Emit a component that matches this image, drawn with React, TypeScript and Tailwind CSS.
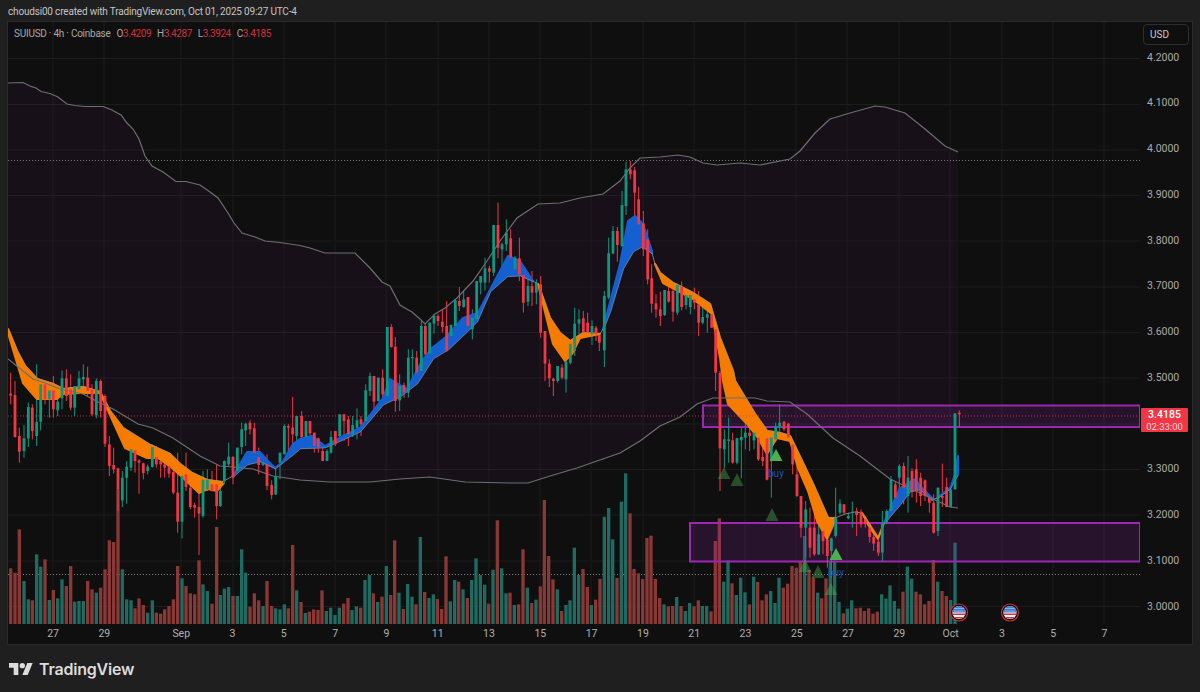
type Candle = { x: number; wt: number; bt: number; bb: number; wb: number; up: boolean };
type Bar = { x: number; top: number; up: boolean };
type Pt = [number, number];

const g = 1;
const r = 0;

// rows were read off 3x crops of the chart, so each block keeps its crop origin
function candles(x0: number, y0: number, rows: number[][]): Candle[] {
  return rows.map(([z, wt, bt, bb, wb, c]) => ({
    x: x0 + z / 3,
    wt: y0 + wt / 3,
    bt: y0 + bt / 3,
    bb: y0 + bb / 3,
    wb: y0 + wb / 3,
    up: c === g,
  }));
}

function bars(x0: number, y0: number, rows: number[][]): Bar[] {
  return rows.map(([z, top, c]) => ({ x: x0 + z / 3, top: y0 + top / 3, up: c === g }));
}

const CANDLES: Candle[] = [
  ...candles(0, 320, [
    [32, 155, 218, 224, 250, r], [45, 180, 222, 348, 350, r], [58, 320, 345, 392, 425, r], [72, 312, 352, 390, 410, g],
    [85, 245, 258, 352, 378, g], [97, 250, 260, 330, 355, r], [110, 130, 303, 345, 375, g], [122, 185, 190, 302, 328, g],
    [135, 180, 190, 235, 250, r], [148, 195, 208, 235, 290, g], [160, 165, 208, 265, 290, r], [173, 235, 242, 268, 285, g],
    [186, 148, 172, 232, 265, g], [199, 145, 172, 225, 240, r], [212, 160, 205, 260, 268, r], [224, 195, 195, 260, 285, g],
    [237, 150, 172, 205, 210, g], [250, 130, 168, 175, 210, g], [263, 137, 170, 210, 225, r], [276, 190, 205, 280, 285, r],
    [289, 172, 180, 283, 292, g], [302, 175, 180, 270, 290, r], [315, 220, 225, 368, 378, r], [328, 345, 370, 435, 465, r],
    [341, 380, 432, 445, 458, r], [354, 440, 442, 505, 570, r], [367, 450, 470, 538, 558, g], [380, 420, 437, 470, 548, g],
    [393, 385, 385, 440, 450, g], [405, 385, 388, 420, 455, r], [417, 415, 418, 425, 518, r], [430, 425, 427, 456, 475, r],
    [443, 430, 437, 450, 460, g], [457, 370, 378, 438, 440, g], [469, 375, 408, 430, 440, r], [482, 395, 420, 430, 470, r],
    [494, 405, 430, 440, 470, r], [507, 425, 435, 458, 470, r], [520, 440, 453, 515, 520, r], [533, 395, 515, 602, 635, r],
    [546, 450, 465, 602, 652, g], [558, 395, 460, 498, 510, r], [571, 465, 500, 558, 565, r], [584, 545, 552, 560, 590, r],
    [597, 510, 558, 578, 702, r], [609, 450, 476, 585, 590, g], [622, 445, 476, 505, 510, g], [636, 450, 490, 510, 512, r],
    [650, 430, 490, 555, 595, r], [661, 490, 510, 555, 558, g], [673, 418, 420, 480, 490, g], [686, 365, 407, 430, 435, g],
    [699, 405, 408, 470, 490, r], [712, 380, 380, 450, 455, g], [725, 305, 325, 378, 400, g], [737, 305, 308, 328, 375, g],
    [750, 298, 305, 325, 340, r], [763, 305, 322, 395, 395, r], [776, 380, 408, 432, 460, r], [789, 405, 425, 432, 435, g],
    [801, 400, 430, 495, 508, r], [815, 478, 492, 522, 535, r], [827, 440, 465, 520, 522, g], [840, 395, 395, 425, 475, g],
    [853, 310, 315, 400, 400, g], [865, 310, 315, 320, 392, r], [878, 228, 320, 340, 400, r], [890, 285, 285, 345, 375, g],
  ]),
  ...candles(300, 200, [
    [5, 630, 645, 708, 720, r], [18, 660, 660, 708, 735, g], [30, 660, 660, 697, 725, r], [43, 695, 695, 735, 755, r],
    [55, 710, 712, 738, 755, r], [68, 730, 750, 780, 780, r], [81, 745, 750, 780, 780, g], [93, 690, 708, 755, 758, g],
    [106, 690, 690, 730, 735, r], [119, 640, 640, 705, 715, g], [132, 640, 640, 660, 720, r], [145, 645, 655, 700, 735, r],
    [158, 645, 672, 700, 708, g], [171, 622, 658, 680, 715, g], [183, 645, 655, 670, 705, r], [197, 550, 568, 660, 665, g],
    [210, 515, 525, 570, 585, g], [222, 525, 525, 602, 625, r], [235, 530, 530, 600, 602, g], [248, 505, 530, 580, 600, r],
    [262, 378, 378, 585, 590, g], [274, 370, 378, 438, 440, r], [286, 408, 437, 600, 632, r], [299, 520, 555, 598, 630, g],
    [312, 545, 552, 575, 590, r], [325, 445, 470, 575, 590, g], [337, 445, 468, 472, 535, g], [350, 450, 470, 515, 520, r],
    [364, 360, 375, 510, 510, g], [376, 370, 375, 460, 465, r], [389, 365, 365, 458, 458, g], [402, 340, 345, 368, 398, g],
    [414, 340, 345, 360, 375, r], [427, 325, 362, 378, 395, r], [440, 300, 375, 450, 452, r], [453, 370, 372, 405, 408, g],
    [466, 295, 298, 375, 380, g], [478, 258, 300, 315, 330, r], [491, 270, 295, 318, 320, g], [504, 288, 288, 375, 385, r],
    [517, 325, 350, 385, 415, g], [530, 240, 240, 355, 360, g], [542, 225, 225, 245, 280, g], [555, 170, 202, 245, 268, g],
    [568, 195, 202, 212, 245, r], [581, 72, 72, 215, 225, g], [594, 5, 72, 140, 172, r], [606, 125, 130, 145, 208, g],
    [619, 55, 95, 130, 150, g], [632, 85, 112, 170, 190, r], [645, 165, 170, 205, 205, g], [658, 110, 172, 220, 240, r],
    [670, 210, 222, 305, 335, r], [684, 215, 255, 302, 315, g], [696, 210, 255, 275, 315, r], [709, 235, 245, 275, 310, g],
    [722, 225, 250, 395, 410, r], [735, 390, 390, 488, 540, r], [748, 475, 488, 532, 558, r], [760, 530, 533, 540, 585, r],
    [773, 495, 495, 540, 545, g], [786, 490, 500, 530, 535, r], [798, 480, 482, 535, 575, g], [811, 425, 428, 485, 490, g],
    [824, 320, 368, 450, 465, g], [837, 325, 355, 368, 400, g], [850, 330, 352, 395, 400, r], [863, 335, 365, 395, 400, r],
    [876, 358, 375, 400, 432, g], [888, 375, 380, 400, 420, r], [898, 400, 402, 425, 450, r],
  ]),
  ...candles(560, 140, [
    [133, 450, 465, 628, 678, g], [146, 290, 337, 470, 475, g], [159, 255, 270, 337, 340, g], [172, 258, 270, 312, 362, r],
    [186, 150, 192, 315, 318, g], [198, 62, 85, 195, 222, g], [211, 60, 85, 100, 115, r], [224, 78, 88, 155, 250, r],
    [236, 138, 175, 250, 255, r], [250, 210, 247, 325, 345, r], [263, 265, 295, 415, 430, r], [275, 370, 412, 488, 515, r],
    [288, 460, 487, 505, 530, r], [301, 452, 505, 525, 555, r], [314, 447, 447, 522, 525, g], [326, 435, 450, 482, 485, r],
    [339, 430, 450, 512, 542, r], [352, 428, 432, 515, 522, g], [365, 422, 437, 498, 508, r], [378, 452, 462, 492, 505, g],
    [391, 458, 462, 498, 520, g], [403, 440, 475, 485, 505, r], [416, 450, 490, 545, 585, r], [428, 475, 528, 545, 550, g],
    [442, 505, 520, 530, 575, g], [455, 520, 520, 560, 560, r], [467, 555, 565, 695, 750, r],
  ]),
  ...candles(680, 380, [
    [120, -30, -24, 202, 330, r], [133, 145, 175, 205, 260, g], [146, 110, 175, 180, 245, g], [158, 155, 178, 245, 248, r],
    [171, 170, 172, 245, 250, g], [184, 140, 168, 178, 292, g], [196, 120, 155, 170, 205, g], [209, 125, 155, 165, 210, r],
    [222, 120, 155, 178, 205, g], [235, 150, 170, 235, 240, r], [248, 200, 228, 240, 255, r], [261, 170, 172, 296, 298, r],
    [274, 170, 170, 240, 350, g], [287, 125, 135, 175, 175, g], [299, 70, 125, 140, 175, g], [312, 120, 122, 145, 150, r],
    [325, 125, 128, 170, 180, r], [338, 185, 190, 250, 280, r], [351, 245, 280, 345, 348, r], [363, 345, 345, 440, 470, r],
    [377, 360, 385, 440, 530, g], [390, 380, 440, 500, 530, r], [403, 395, 440, 520, 525, r], [416, 430, 460, 520, 522, g],
    [429, 440, 450, 480, 520, r], [442, 440, 475, 525, 560, r], [454, 470, 472, 510, 590, g], [467, 320, 410, 465, 470, g],
    [480, 355, 368, 395, 400, g], [492, 370, 370, 395, 400, r], [505, 395, 405, 412, 415, g], [517, 362, 392, 395, 440, g],
    [530, 380, 390, 402, 465, r], [543, 385, 392, 430, 440, r], [556, 405, 415, 430, 440, r], [569, 430, 440, 468, 485, r],
    [581, 460, 468, 488, 510, r], [595, 475, 482, 515, 525, r], [607, 390, 425, 515, 540, g], [620, 385, 390, 425, 430, g],
    [633, 285, 295, 390, 395, g], [646, 300, 310, 350, 365, r], [658, 250, 255, 290, 345, g], [671, 245, 255, 320, 370, r],
    [684, 225, 290, 345, 395, g], [696, 262, 270, 330, 350, r], [709, 235, 265, 330, 365, r],
  ]),
  ...candles(900, 380, [
    [62, 275, 290, 345, 375, r], [75, 295, 298, 345, 360, r], [88, 340, 350, 365, 395, r], [101, 340, 365, 455, 458, r],
    [114, 320, 320, 450, 465, g], [127, 248, 345, 350, 378, r], [140, 290, 318, 378, 378, r], [152, 318, 325, 378, 378, g],
    [165, 97, 97, 325, 325, g], [178, 88, 95, 100, 138, r],
  ]),
];

const VOLUME: Bar[] = [
  ...bars(0, 320, [
    [32, 742, r], [45, 755, r], [58, 625, r], [72, 780, g], [85, 835, g], [97, 838, r], [110, 700, g], [122, 737, g],
    [135, 715, r], [148, 837, g], [160, 807, r], [173, 832, g], [186, 775, g], [199, 795, r], [212, 735, r], [224, 842, g],
    [237, 840, g], [250, 840, g], [263, 780, r], [276, 805, r], [289, 815, g], [302, 800, r], [315, 745, r], [328, 658, r],
    [341, 663, r], [354, 505, r], [367, 745, g], [380, 835, g], [393, 838, g], [405, 862, r], [417, 832, r], [430, 852, r],
    [443, 875, g], [457, 838, g], [469, 875, r], [482, 878, r], [494, 865, r], [507, 855, r], [520, 835, r], [533, 735, r],
    [546, 772, g], [558, 795, r], [571, 817, r], [584, 820, r], [597, 718, r], [609, 790, g], [622, 810, g], [636, 848, r],
    [650, 618, r], [661, 822, g], [673, 803, g], [686, 798, g], [699, 825, r], [712, 825, g], [725, 685, g], [737, 755, g],
    [750, 857, r], [763, 817, r], [776, 838, r], [789, 855, g], [801, 780, r], [815, 855, r], [827, 862, g], [840, 865, g],
    [853, 850, g], [865, 862, r], [878, 672, r], [890, 808, g],
  ]),
  ...bars(296, 480, [
    [15, 363, r], [28, 396, g], [40, 392, r], [53, 385, r], [66, 387, r], [78, 328, r], [91, 390, g], [104, 380, g],
    [117, 402, g], [130, 380, g], [143, 368, r], [156, 351, r], [168, 387, g], [181, 376, g], [194, 380, r], [207, 297, g],
    [220, 282, g], [232, 337, r], [245, 363, g], [258, 347, r], [271, 255, g], [284, 342, r], [296, 178, r], [309, 335, g],
    [322, 384, r], [335, 309, g], [348, 347, g], [360, 370, r], [373, 168, g], [386, 333, r], [399, 351, g], [412, 340, g],
    [424, 354, r], [437, 384, r], [450, 226, r], [463, 361, g], [476, 297, g], [488, 302, r], [501, 325, g], [514, 351, r],
    [527, 297, g], [540, 232, g], [553, 282, g], [566, 311, g], [578, 368, r], [591, 266, g], [604, 118, r], [617, 262, g],
    [630, 337, g], [642, 335, r], [655, 372, g],
  ]),
  ...bars(510, 460, [
    [26, 430, r], [39, 265, r], [52, 380, g], [65, 426, r], [78, 416, g], [91, 376, r], [103, 117, r], [116, 285, r],
    [129, 355, r], [142, 385, g], [155, 450, r], [168, 432, g], [180, 418, g], [193, 260, g], [206, 342, g], [219, 324, r],
    [232, 378, r], [244, 432, g], [257, 416, r], [270, 354, r], [283, 167, g], [296, 141, g], [308, 235, g], [321, 351, r],
    [334, 122, g], [347, 37, g], [360, 157, r], [372, 324, r], [385, 337, r], [398, 354, r], [411, 231, r], [423, 224, r],
    [436, 354, r], [449, 411, r], [462, 430, g], [475, 436, r], [488, 435, r], [500, 408, g], [513, 435, r], [526, 450, g],
    [539, 426, g], [552, 436, r], [565, 418, r], [577, 435, g], [590, 435, g], [603, 451, r], [616, 240, r], [628, 172, r],
    [641, 362, g], [654, 298, g],
  ]),
  ...bars(680, 380, [
    [156, 607, r], [169, 642, g], [182, 590, g], [195, 634, g], [208, 670, r], [221, 587, g], [233, 603, r], [246, 658, r],
    [259, 640, r], [272, 630, g], [285, 666, g], [297, 590, g], [310, 620, r], [323, 608, r], [336, 555, r], [349, 560, r],
    [361, 540, r], [374, 465, g], [387, 567, r], [400, 590, r], [413, 635, g], [425, 652, r], [438, 592, r], [451, 540, g],
    [464, 538, g], [477, 663, g], [490, 697, r], [502, 683, g], [515, 658, g], [528, 682, r], [541, 680, r], [553, 690, r],
    [566, 682, r], [579, 698, r], [592, 692, r], [605, 640, g], [618, 653, g], [630, 613, g], [643, 660, g], [656, 683, g],
    [669, 632, r], [682, 557, g], [695, 593, g], [708, 632, r],
  ]),
  ...bars(900, 380, [
    [61, 640, r], [74, 670, r], [87, 660, r], [100, 537, r], [113, 602, g], [126, 630, r], [139, 645, r], [152, 657, g],
    [165, 485, g],
  ]),
];

const UPPER: Pt[] = [
  [8, 82], [23, 81.5], [30, 85], [36, 87], [41, 90.5], [50, 92.5], [58, 96], [67, 103], [75, 104.5], [85, 105.5], [103, 105.5],
  [112, 109], [121, 114], [127, 122], [133, 128], [139, 138], [145, 155], [152, 165], [163, 171], [176, 180.5], [186, 180.5],
  [200, 184], [210, 191], [218, 197], [228, 212], [234, 222], [242, 232], [255, 236], [265, 240], [280, 241.5], [300, 244.5],
  [310, 247], [325, 252], [355, 252], [370, 267], [382, 281], [390, 285], [400, 304], [405, 307], [412, 311], [420, 318],
  [425, 323], [435, 313], [445, 307], [457, 297], [473, 280], [487, 260], [500, 240], [517, 217], [538, 203], [560, 202],
  [580, 197], [603, 193], [620, 180], [630, 167], [640, 157], [660, 156], [678, 154], [690, 156], [703, 162], [717, 164],
  [740, 162], [760, 164], [790, 158], [800, 150], [815, 132], [830, 118], [850, 112], [875, 105], [885, 106], [905, 112],
  [925, 128], [945, 145], [958, 151],
];

const LOWER: Pt[] = [
  [8, 358], [33, 378], [45, 382], [60, 388], [83, 393], [100, 402], [113, 408], [138, 423], [153, 427], [173, 437], [200, 455],
  [220, 465], [233, 466], [253, 468], [273, 475], [300, 479], [330, 481], [370, 481], [400, 478], [430, 476], [465, 481],
  [510, 482], [528, 482], [550, 475], [577, 467], [597, 460], [620, 452], [640, 440], [660, 425], [680, 416], [697, 403],
  [713, 397], [755, 397], [767, 400], [790, 401], [807, 413], [833, 437], [860, 455], [890, 478], [920, 492], [933, 498],
  [950, 506], [958, 507],
];

const ORANGE = "#f57c00";
const BLUE = "#1560d0";

const RIBBONS: { color: string; top: Pt[]; bottom: Pt[] }[] = [
  {
    color: ORANGE,
    top: [[8, 328], [17, 350], [25, 365], [37, 378], [53, 383], [63, 388], [83, 386], [100, 391], [110, 410], [123, 427], [150, 444], [170, 453], [180, 463], [192, 472], [207, 479], [222, 481]],
    bottom: [[8, 332], [23, 382], [37, 398], [57, 398], [63, 393], [80, 392], [100, 392], [115, 425], [125, 447], [147, 457], [158, 457], [172, 467], [182, 476], [199, 492], [208, 488], [217, 490], [223, 483]],
  },
  {
    color: BLUE,
    top: [[233, 475], [247, 451], [260, 451], [268, 460], [275, 467], [282, 462], [293, 443], [300, 438], [312, 435], [325, 445], [343, 435], [360, 427], [383, 397], [390, 378], [400, 384], [407, 388], [422, 360], [432, 347], [447, 335], [463, 317], [478, 312], [493, 283], [508, 255], [520, 260], [533, 280]],
    bottom: [[233, 475], [247, 463], [260, 460], [275, 467], [293, 453], [300, 447], [325, 446], [343, 438], [360, 430], [383, 403], [400, 395], [417, 382], [433, 357], [448, 348], [467, 330], [477, 320], [490, 290], [507, 275], [520, 274], [533, 280]],
  },
  {
    color: ORANGE,
    top: [[538, 283], [550, 317], [560, 332], [570, 340], [583, 332], [600, 333]],
    bottom: [[538, 283], [543, 303], [553, 343], [565, 360], [572, 353], [580, 337], [600, 333]],
  },
  {
    color: BLUE,
    top: [[603, 328], [620, 263], [628, 220], [635, 215], [643, 223], [652, 250]],
    bottom: [[603, 328], [610, 310], [623, 267], [633, 250], [642, 245], [652, 252]],
  },
  {
    color: ORANGE,
    top: [[655, 263], [660, 272], [673, 282], [693, 292], [710, 303], [720, 337], [733, 370], [735, 380], [755, 413], [767, 430], [780, 432], [790, 435], [803, 462], [813, 483], [828, 517], [835, 517]],
    bottom: [[655, 263], [663, 282], [693, 298], [712, 313], [720, 357], [723, 380], [728, 403], [747, 423], [758, 437], [767, 453], [777, 437], [790, 440], [798, 467], [808, 490], [817, 520], [827, 538], [835, 520]],
  },
  {
    color: ORANGE,
    top: [[862, 512], [878, 537], [884, 522]],
    bottom: [[862, 512], [870, 527], [878, 538], [884, 522]],
  },
  {
    color: BLUE,
    top: [[884, 522], [900, 487], [915, 478], [922, 487], [932, 497]],
    bottom: [[884, 522], [900, 503], [910, 490], [920, 488], [932, 499]],
  },
  {
    color: BLUE,
    top: [[937, 497], [940, 495], [950, 488], [955, 473], [958, 455]],
    bottom: [[937, 497], [950, 487], [955, 478], [958, 473]],
  },
];

// grey slow average between the ribbons, where they pinch shut
const CONNECTORS: Pt[][] = [
  [[222, 481], [233, 475]],
  [[533, 280], [538, 283]],
  [[600, 333], [603, 328]],
  [[652, 252], [655, 263]],
  [[835, 517], [845, 513], [855, 511], [862, 512]],
  [[932, 499], [937, 497]],
];

const GREEN_TRIANGLES: [number, number, number][] = [
  [724, 466, 478],
  [737, 472, 485],
  [772, 507, 520],
  [805, 558, 571],
  [818, 564, 577],
  [831, 582, 594],
];

const PRICES = ["4.2000", "4.1000", "4.0000", "3.9000", "3.8000", "3.7000", "3.6000", "3.5000", "", "3.3000", "3.2000", "3.1000", "3.0000"];
const GRID_Y = [57.5, 103.5, 149, 194.5, 240, 286, 331.5, 377, 423, 468.5, 514, 560, 605.5];
const GRID_X = [53, 104, 181, 233, 284, 335, 386, 438, 489, 540, 591, 643, 694, 745, 796, 847, 899, 950, 1002, 1053, 1104];
const TICKS = ["27", "29", "Sep", "3", "5", "7", "9", "11", "13", "15", "17", "19", "21", "23", "25", "27", "29", "Oct", "3", "5", "7"];
const OHLC = [["O", "3.4209"], ["H", "3.4287"], ["L", "3.3924"], ["C", "3.4185"]];

function pts(line: Pt[]) {
  return line.map(([x, y]) => `${x},${y}`).join(" ");
}

function Flag({ cx, cy }: { cx: number; cy: number }) {
  return (
    <g transform={`translate(${cx} ${cy})`}>
      <circle r="8.5" fill="#0f0f0f" stroke="#c62f36" strokeWidth="1.2" />
      <circle r="6.6" fill="#f4f4f4" />
      <path d="M-6.3 -2 A6.6 6.6 0 0 1 -5.2 -4 L5.2 -4 A6.6 6.6 0 0 1 6.3 -2 Z" fill="#d8343c" />
      <path d="M-6.5 1 L6.5 1 L6.4 2.4 L-6.4 2.4 Z M-4.9 4.4 L4.9 4.4 A6.6 6.6 0 0 1 3 5.9 L-3 5.9 A6.6 6.6 0 0 1 -4.9 4.4 Z" fill="#d8343c" />
      <path d="M-6.6 0 A6.6 6.6 0 0 1 0 -6.6 A6.6 6.6 0 0 1 6.6 0 Z" fill="#3f7fd6" />
      {[-4, -2, 0, 2, 4].map((x) => (
        <g key={x}>
          <circle cx={x} cy="-4" r="0.5" fill="#fff" />
          <circle cx={x} cy="-1.6" r="0.5" fill="#fff" />
        </g>
      ))}
    </g>
  );
}

function ChartDrawing() {
  return (
    <svg viewBox="8 21 1132 602" className="block h-full w-full">
      {GRID_Y.map((y) => (
        <line key={y} x1="8" x2="1140" y1={y} y2={y} stroke="#1c1c1c" />
      ))}
      {GRID_X.map((x) => (
        <line key={x} x1={x} x2={x} y1="21" y2="623" stroke="#1c1c1c" />
      ))}

      <polygon points={pts([...UPPER, ...[...LOWER].reverse()])} fill="#9c27b0" fillOpacity="0.055" />
      <line x1="8" x2="1140" y1="159.5" y2="159.5" stroke="#7a7a7a" strokeDasharray="1 2" />
      <line x1="8" x2="1140" y1="573.5" y2="573.5" stroke="#7a7a7a" strokeDasharray="1 2" />

      {VOLUME.map((b) => (
        <rect
          key={b.x}
          x={b.x - 1.65}
          y={b.top}
          width="3.3"
          height={623 - b.top}
          fill={b.up ? "#1f6b62" : "#8a3835"}
        />
      ))}

      <rect x="703" y="404.5" width="437" height="21.5" fill="#9c27b0" fillOpacity="0.18" stroke="#9c27b0" strokeWidth="2" />
      <rect x="690" y="522" width="450" height="38.5" fill="#9c27b0" fillOpacity="0.18" stroke="#9c27b0" strokeWidth="2" />

      {CANDLES.map((c) => (
        <line key={c.x} x1={c.x} x2={c.x} y1={c.wt} y2={c.wb} stroke={c.up ? "#0b9a80" : "#f23645"} strokeWidth="1" />
      ))}

      {RIBBONS.map((rb, i) => (
        <polygon
          key={i}
          points={pts([...rb.top, ...[...rb.bottom].reverse()])}
          fill={rb.color}
          stroke={rb.color}
          strokeWidth="2"
          strokeLinejoin="round"
        />
      ))}
      {RIBBONS.map((rb, i) => (
        <polyline
          key={i}
          points={pts(rb.color === ORANGE ? rb.top : rb.bottom)}
          fill="none"
          stroke="#9a9a9a"
          strokeOpacity="0.6"
          transform={rb.color === ORANGE ? "translate(0.6 -0.6)" : "translate(0.6 0.8)"}
        />
      ))}
      {CONNECTORS.map((line, i) => (
        <polyline key={i} points={pts(line)} fill="none" stroke="#9a9a9a" strokeOpacity="0.8" />
      ))}
      <polyline points={pts(UPPER)} fill="none" stroke="#6e6e72" strokeWidth="1.2" />
      <polyline points={pts(LOWER)} fill="none" stroke="#6e6e72" strokeWidth="1.2" />

      {CANDLES.map((c) => (
        <rect
          key={c.x}
          x={c.x - 1.4}
          y={c.bt}
          width="2.8"
          height={Math.max(c.bb - c.bt, 1)}
          fill={c.up ? "#0b9a80" : "#f23645"}
        />
      ))}

      {GREEN_TRIANGLES.map(([x, top, bottom]) => (
        <polygon key={x} points={`${x},${top} ${x + 6.5},${bottom} ${x - 6.5},${bottom}`} fill="#4caf50" fillOpacity="0.4" />
      ))}
      <polygon points="776,448 782.5,460 769.5,460" fill="#4caf50" />
      <polygon points="836,547 842.5,559 829.5,559" fill="#4caf50" />

      <line x1="8" x2="1140" y1="415" y2="415" stroke="#f23645" strokeOpacity="0.75" strokeDasharray="1 2" />

      <Flag cx={959} cy={611.5} />
      <Flag cx={1010} cy={611.5} />
    </svg>
  );
}

export default function App() {
  return (
    <div className="flex h-[692px] w-[1200px] flex-col overflow-hidden bg-[#1f1f1f] font-['Roboto',sans-serif] text-[#b8b8b8]">
      <header className="flex h-[21px] shrink-0 items-center px-2 pt-px text-[10px] tracking-[-0.18px] text-[#c4c4c4]">
        choudsi00 created with TradingView.com, Oct 01, 2025 09:27 UTC-4
      </header>

      <div className="mx-[7px] flex h-[624px] shrink-0 flex-col border border-[#2a2a2a] bg-[#0f0f0f]">
        <div className="flex h-[602px]">
          <div className="relative w-[1132px] shrink-0">
            <ChartDrawing />
            <div className="absolute left-1.5 top-1 flex gap-[6px] text-[10px] tracking-[-0.25px] text-[#a8a8a8]">
              <span>SUIUSD · 4h · Coinbase</span>
              {OHLC.map(([k, v]) => (
                <span key={k} className="tracking-[-0.45px]">
                  {k}
                  <span className="text-[#d32f3f]">{v}</span>
                </span>
              ))}
            </div>
            <span className="absolute left-[760px] top-[444px] text-[10px] text-[#1f4fb8]">buy</span>
            <span className="absolute left-[820px] top-[543px] text-[10px] text-[#1f4fb8]">buy</span>
          </div>

          <div className="relative w-[51px] shrink-0">
            <div className="absolute left-[3px] top-[2px] flex h-[21px] w-[46px] items-center rounded-[4px] border border-[#2e2e2e] pl-[6px] text-[10px] text-[#c8c8c8]">
              USD
            </div>
            <div className="flex flex-col pl-[7px] pt-[12.6px] text-[10.5px] text-[#aaaaaa]">
              {PRICES.map((p, i) => (
                <div key={i} className="flex h-[45.75px] items-center">
                  {p}
                </div>
              ))}
            </div>
            <div className="absolute left-px top-[386px] flex h-[24px] w-[47px] flex-col items-center justify-center rounded-[1px] bg-[#f23645] text-white">
              <span className="text-[10.5px] font-medium leading-[12px]">3.4185</span>
              <span className="text-[9.5px] leading-[11px] text-[#ffd5d8]">02:33:00</span>
            </div>
          </div>
        </div>

        <div className="flex h-[21px] items-center pl-[19.4px] text-[10.5px] text-[#b0b0b0]">
          {TICKS.map((t, i) => (
            <span key={i} className={t === "Sep" ? "ml-[25.6px] w-[51.3px] text-center" : "w-[51.3px] text-center"}>
              {t}
            </span>
          ))}
        </div>
      </div>

      <footer className="flex flex-1 items-center gap-[6px] pl-[9px] text-[#dcdcdc]">
        <svg viewBox="0 4 36 18" className="h-3 w-6 fill-current">
          <path d="M14 22H7V11H0V4h14v18zM28 22h-8l7.5-18h8L28 22z" />
          <circle cx="20" cy="8" r="4" />
        </svg>
        <span className="font-['Inter',sans-serif] text-[16px] font-semibold leading-none tracking-[-0.2px]">TradingView</span>
      </footer>
    </div>
  );
}
